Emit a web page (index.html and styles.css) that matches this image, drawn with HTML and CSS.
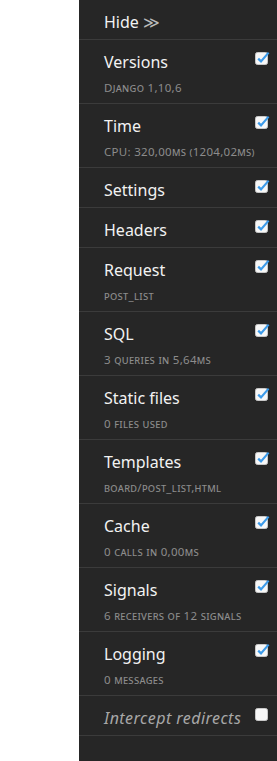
FILE: index.html
```html
<!DOCTYPE html>
<html>
<head>
    <meta charset="UTF-8">
    <title>Debug Toolbar</title>
    <link rel="stylesheet" href="styles.css">
</head>
<body>
    <!-- 디버그 툴바 -->
    <div class="toolbar">
        <ul class="panels">
            <li class="panel hide-row">
                <div class="panel-text">
                    <span class="title">Hide <span class="arrows">&#8811;</span></span>
                </div>
            </li>
            <li class="panel">
                <div class="panel-text">
                    <span class="title">Versions</span>
                    <small class="sub">Django 1,10,6</small>
                </div>
                <svg class="check" width="15" height="14" viewBox="0 0 15 14"><rect x="0.5" y="1.5" width="12" height="12" rx="2" fill="#f7f7f7" stroke="#c8c8c8"/><path d="M3.2 7.6 L6 10.4 L13.6 1.6" stroke="#3d9be9" stroke-width="2.2" fill="none"/></svg>
            </li>
            <li class="panel">
                <div class="panel-text">
                    <span class="title">Time</span>
                    <small class="sub">CPU: 320,00ms (1204,02ms)</small>
                </div>
                <svg class="check" width="15" height="14" viewBox="0 0 15 14"><rect x="0.5" y="1.5" width="12" height="12" rx="2" fill="#f7f7f7" stroke="#c8c8c8"/><path d="M3.2 7.6 L6 10.4 L13.6 1.6" stroke="#3d9be9" stroke-width="2.2" fill="none"/></svg>
            </li>
            <li class="panel">
                <div class="panel-text">
                    <span class="title">Settings</span>
                </div>
                <svg class="check" width="15" height="14" viewBox="0 0 15 14"><rect x="0.5" y="1.5" width="12" height="12" rx="2" fill="#f7f7f7" stroke="#c8c8c8"/><path d="M3.2 7.6 L6 10.4 L13.6 1.6" stroke="#3d9be9" stroke-width="2.2" fill="none"/></svg>
            </li>
            <li class="panel">
                <div class="panel-text">
                    <span class="title">Headers</span>
                </div>
                <svg class="check" width="15" height="14" viewBox="0 0 15 14"><rect x="0.5" y="1.5" width="12" height="12" rx="2" fill="#f7f7f7" stroke="#c8c8c8"/><path d="M3.2 7.6 L6 10.4 L13.6 1.6" stroke="#3d9be9" stroke-width="2.2" fill="none"/></svg>
            </li>
            <li class="panel">
                <div class="panel-text">
                    <span class="title">Request</span>
                    <small class="sub">post_list</small>
                </div>
                <svg class="check" width="15" height="14" viewBox="0 0 15 14"><rect x="0.5" y="1.5" width="12" height="12" rx="2" fill="#f7f7f7" stroke="#c8c8c8"/><path d="M3.2 7.6 L6 10.4 L13.6 1.6" stroke="#3d9be9" stroke-width="2.2" fill="none"/></svg>
            </li>
            <li class="panel">
                <div class="panel-text">
                    <span class="title">SQL</span>
                    <small class="sub">3 queries in 5,64ms</small>
                </div>
                <svg class="check" width="15" height="14" viewBox="0 0 15 14"><rect x="0.5" y="1.5" width="12" height="12" rx="2" fill="#f7f7f7" stroke="#c8c8c8"/><path d="M3.2 7.6 L6 10.4 L13.6 1.6" stroke="#3d9be9" stroke-width="2.2" fill="none"/></svg>
            </li>
            <li class="panel">
                <div class="panel-text">
                    <span class="title">Static files</span>
                    <small class="sub">0 files used</small>
                </div>
                <svg class="check" width="15" height="14" viewBox="0 0 15 14"><rect x="0.5" y="1.5" width="12" height="12" rx="2" fill="#f7f7f7" stroke="#c8c8c8"/><path d="M3.2 7.6 L6 10.4 L13.6 1.6" stroke="#3d9be9" stroke-width="2.2" fill="none"/></svg>
            </li>
            <li class="panel">
                <div class="panel-text">
                    <span class="title">Templates</span>
                    <small class="sub">board/post_list,html</small>
                </div>
                <svg class="check" width="15" height="14" viewBox="0 0 15 14"><rect x="0.5" y="1.5" width="12" height="12" rx="2" fill="#f7f7f7" stroke="#c8c8c8"/><path d="M3.2 7.6 L6 10.4 L13.6 1.6" stroke="#3d9be9" stroke-width="2.2" fill="none"/></svg>
            </li>
            <li class="panel">
                <div class="panel-text">
                    <span class="title">Cache</span>
                    <small class="sub">0 calls in 0,00ms</small>
                </div>
                <svg class="check" width="15" height="14" viewBox="0 0 15 14"><rect x="0.5" y="1.5" width="12" height="12" rx="2" fill="#f7f7f7" stroke="#c8c8c8"/><path d="M3.2 7.6 L6 10.4 L13.6 1.6" stroke="#3d9be9" stroke-width="2.2" fill="none"/></svg>
            </li>
            <li class="panel">
                <div class="panel-text">
                    <span class="title">Signals</span>
                    <small class="sub">6 receivers of 12 signals</small>
                </div>
                <svg class="check" width="15" height="14" viewBox="0 0 15 14"><rect x="0.5" y="1.5" width="12" height="12" rx="2" fill="#f7f7f7" stroke="#c8c8c8"/><path d="M3.2 7.6 L6 10.4 L13.6 1.6" stroke="#3d9be9" stroke-width="2.2" fill="none"/></svg>
            </li>
            <li class="panel">
                <div class="panel-text">
                    <span class="title">Logging</span>
                    <small class="sub">0 messages</small>
                </div>
                <svg class="check" width="15" height="14" viewBox="0 0 15 14"><rect x="0.5" y="1.5" width="12" height="12" rx="2" fill="#f7f7f7" stroke="#c8c8c8"/><path d="M3.2 7.6 L6 10.4 L13.6 1.6" stroke="#3d9be9" stroke-width="2.2" fill="none"/></svg>
            </li>
            <li class="panel">
                <div class="panel-text">
                    <span class="title intercept">Intercept redirects</span>
                </div>
                <svg class="check" width="15" height="14" viewBox="0 0 15 14"><rect x="0.5" y="1.5" width="12" height="12" rx="2" fill="#f7f7f7" stroke="#c8c8c8"/></svg>
            </li>
        </ul>
    </div>
</body>
</html>
```

FILE: styles.css
```css
/* 전체 페이지 */
body {
    margin: 0;
    padding: 0;
    background: #fff;
    display: flex;
    justify-content: flex-end;
    font-family: "Noto Sans", sans-serif;
    overflow: hidden;
}

/* 오른쪽 툴바 */
.toolbar {
    width: 198px;
    min-height: 100vh;
    background-color: #262626;
}

.panels {
    list-style: none;
    margin: 0;
    padding: 0;
}

/* 패널 한 줄 */
.panel {
    display: flex;
    align-items: flex-start;
    padding: 12px 7px 7px 25px;
    border-bottom: 1px solid #3b3b3b;
}

.panel-text {
    flex: 1;
    min-width: 0;
    display: flex;
    flex-direction: column;
}

.title {
    font-size: 16px;
    line-height: 20px;
    color: #f2f2f2;
    white-space: nowrap;
}

.arrows {
    color: #bbb;
}

.intercept {
    font-style: italic;
    letter-spacing: 0.45px;
    color: #a8a8a8;
}

/* 작은 설명 글자 */
.sub {
    font-size: 11.5px;
    line-height: 12px;
    font-variant: small-caps;
    letter-spacing: 0.3px;
    white-space: nowrap;
    color: #8c8c8c;
    margin-top: 10px;
    margin-bottom: 2px;
}

.check {
    margin-top: -1px;
}
```
